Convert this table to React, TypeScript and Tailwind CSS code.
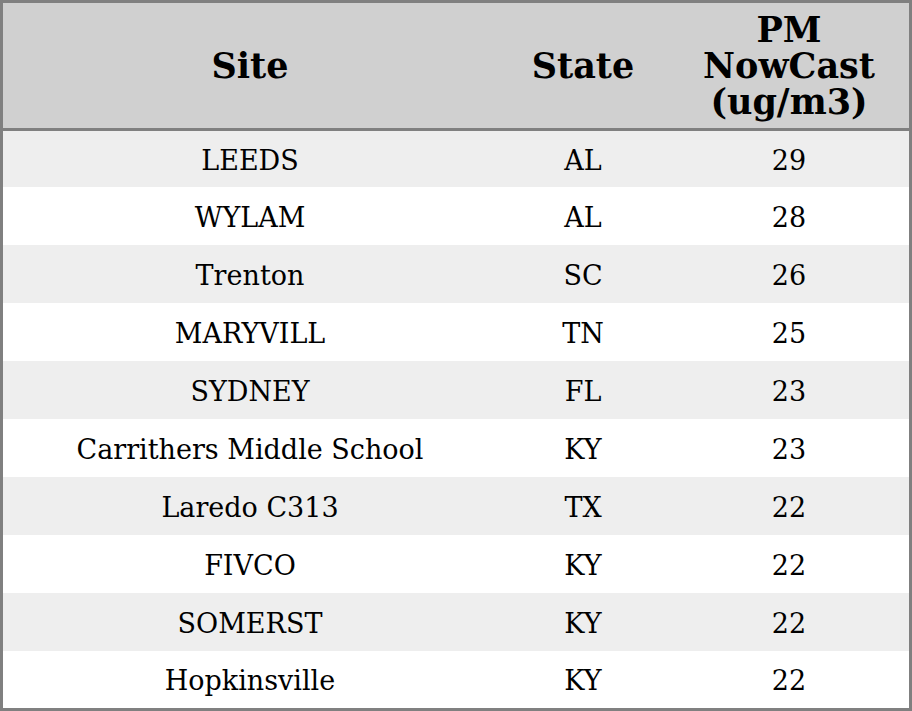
const rows = [
  { site: "LEEDS", state: "AL", pm: 29 },
  { site: "WYLAM", state: "AL", pm: 28 },
  { site: "Trenton", state: "SC", pm: 26 },
  { site: "MARYVILL", state: "TN", pm: 25 },
  { site: "SYDNEY", state: "FL", pm: 23 },
  { site: "Carrithers Middle School", state: "KY", pm: 23 },
  { site: "Laredo C313", state: "TX", pm: 22 },
  { site: "FIVCO", state: "KY", pm: 22 },
  { site: "SOMERST", state: "KY", pm: 22 },
  { site: "Hopkinsville", state: "KY", pm: 22 },
];

export default function App() {
  return (
    <div className="w-[912px] h-[711px] bg-white font-['DejaVu_Serif',serif] text-black">
      <div className="border-[3px] border-[#808080] h-full flex flex-col">
        {/* Header */}
        <div className="grid grid-cols-[494px_172px_1fr] h-[128px] shrink-0 bg-[#d0d0d0] border-b-[3px] border-[#808080] text-[35px] leading-[36px] font-bold">
          <div className="flex items-center justify-center">Site</div>
          <div className="flex items-center justify-center">State</div>
          <div className="flex items-center justify-center text-center">
            PM
            <br />
            NowCast
            <br />
            (ug/m3)
          </div>
        </div>

        {/* Body */}
        <div className="flex-1 grid grid-rows-[56px_repeat(8,58px)_1fr] text-[27px]">
          {rows.map((r, i) => (
            <div
              key={i}
              className={`grid grid-cols-[494px_172px_1fr] items-center text-center pt-[4px] ${
                i % 2 === 0 ? "bg-[#eeeeee]" : "bg-white"
              }`}
            >
              <div>{r.site}</div>
              <div>{r.state}</div>
              <div>{r.pm}</div>
            </div>
          ))}
        </div>
      </div>
    </div>
  );
}
